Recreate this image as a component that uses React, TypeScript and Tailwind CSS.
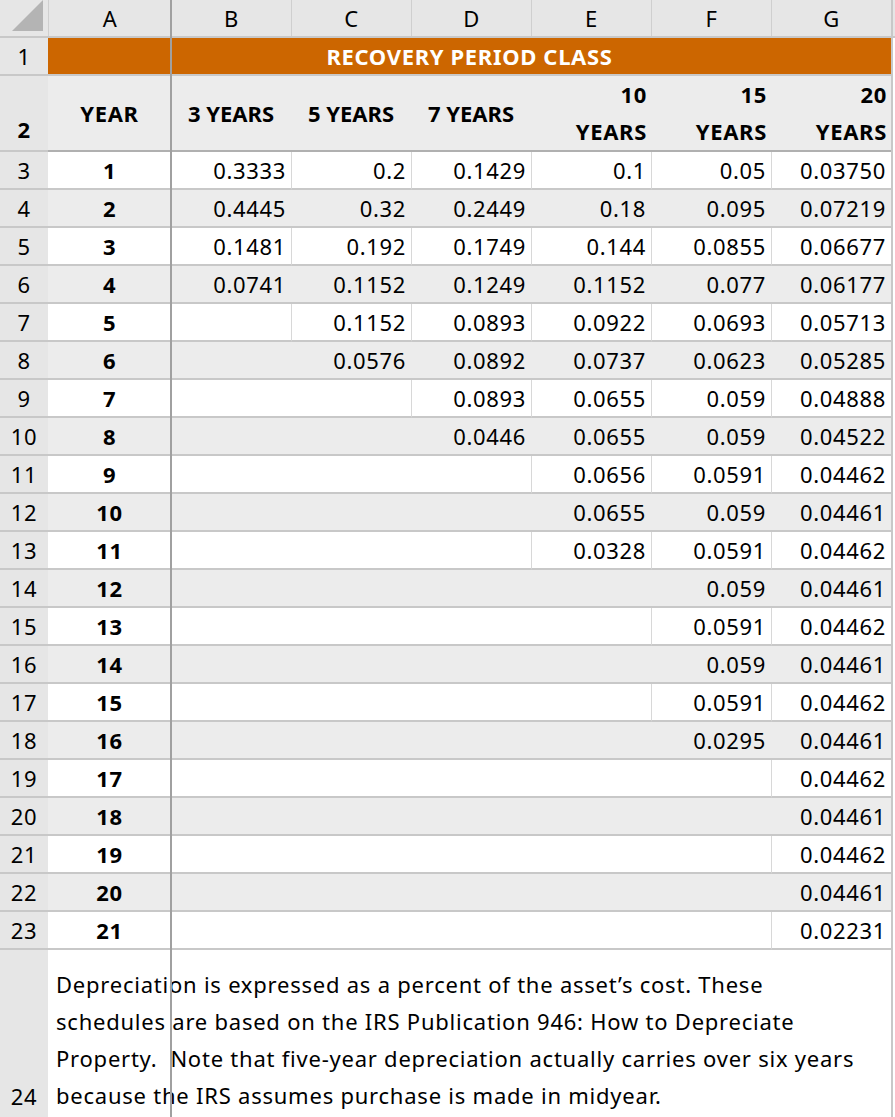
const cols = ["A", "B", "C", "D", "E", "F", "G"];
const widths = ["w-[123px]", "w-[120px]", "w-[120px]", "w-[120px]", "w-[120px]", "w-[120px]", "w-[120px]"];

const data: string[][] = [
  ["0.3333", "0.2", "0.1429", "0.1", "0.05", "0.03750"],
  ["0.4445", "0.32", "0.2449", "0.18", "0.095", "0.07219"],
  ["0.1481", "0.192", "0.1749", "0.144", "0.0855", "0.06677"],
  ["0.0741", "0.1152", "0.1249", "0.1152", "0.077", "0.06177"],
  ["", "0.1152", "0.0893", "0.0922", "0.0693", "0.05713"],
  ["", "0.0576", "0.0892", "0.0737", "0.0623", "0.05285"],
  ["", "", "0.0893", "0.0655", "0.059", "0.04888"],
  ["", "", "0.0446", "0.0655", "0.059", "0.04522"],
  ["", "", "", "0.0656", "0.0591", "0.04462"],
  ["", "", "", "0.0655", "0.059", "0.04461"],
  ["", "", "", "0.0328", "0.0591", "0.04462"],
  ["", "", "", "", "0.059", "0.04461"],
  ["", "", "", "", "0.0591", "0.04462"],
  ["", "", "", "", "0.059", "0.04461"],
  ["", "", "", "", "0.0591", "0.04462"],
  ["", "", "", "", "0.0295", "0.04461"],
  ["", "", "", "", "", "0.04462"],
  ["", "", "", "", "", "0.04461"],
  ["", "", "", "", "", "0.04462"],
  ["", "", "", "", "", "0.04461"],
  ["", "", "", "", "", "0.02231"],
];

const headers = ["3 YEARS", "5 YEARS", "7 YEARS", "10 YEARS", "15 YEARS", "20 YEARS"];

const note = [
  "Depreciation is expressed as a percent of the asset’s cost. These",
  "schedules are based on the IRS Publication 946: How to Depreciate",
  "Property.\u00a0 Note that five-year depreciation actually carries over six years",
  "because the IRS assumes purchase is made in midyear.",
];

function RowHead({ n, tall }: { n: number; tall?: boolean }) {
  return (
    <div className={`w-[48px] shrink-0 bg-[#e6e6e6] border-b-2 border-[#c8c8c8] flex justify-center ${tall ? "items-end pb-1" : "items-center"}`}>
      {n}
    </div>
  );
}

export default function App() {
  return (
    <div className="relative w-[895px] h-[1117px] overflow-hidden bg-white text-[22px] tracking-[0.03em] text-black" style={{ fontFamily: '"Noto Sans", sans-serif' }}>
      {/* column letters */}
      <div className="flex h-[38px] bg-[#e6e6e6] border-b-2 border-[#c8c8c8]">
        <div className="w-[48px] shrink-0 flex items-end justify-end p-[5px]">
          <div className="w-0 h-0 border-l-[31px] border-l-transparent border-b-[31px] border-b-[#b4b4b4]" />
        </div>
        {cols.map((c, i) => (
          <div key={c} className={`${widths[i]} shrink-0 flex items-center justify-center border-l border-[#cfcfcf]`}>{c}</div>
        ))}
      </div>

      {/* row 1 */}
      <div className="flex h-[38px]">
        <RowHead n={1} />
        <div className="w-[843px] shrink-0 bg-[#cc6600] border-b-2 border-[#c8c8c8] flex items-center justify-center text-white font-bold">
          RECOVERY PERIOD CLASS
        </div>
      </div>

      {/* row 2 */}
      <div className="flex h-[76px] font-bold">
        <RowHead n={2} tall />
        <div className="w-[123px] shrink-0 bg-[#ececec] border-b-2 border-[#b0b0b0] flex items-center justify-center">YEAR</div>
        {headers.map((h, i) => (
          <div key={h} className={`w-[120px] shrink-0 bg-[#ececec] border-b-2 border-[#b0b0b0] flex px-1 leading-[37px] ${i < 3 ? "items-center justify-center whitespace-nowrap tracking-normal" : "flex-col items-end justify-end text-right"}`}>
            {i < 3 ? h : h.split(" ").map((w) => <span key={w}>{w}</span>)}
          </div>
        ))}
      </div>

      {/* data rows */}
      {data.map((row, r) => {
        const gray = r % 2 === 1;
        return (
          <div key={r} className="flex h-[38px]">
            <RowHead n={r + 3} />
            <div className={`w-[123px] shrink-0 border-b-2 border-[#c8c8c8] flex items-center justify-center font-bold ${gray ? "bg-[#ececec]" : "bg-white"}`}>{r + 1}</div>
            {row.map((v, i) => (
              <div
                key={i}
                className={`w-[120px] shrink-0 border-b-2 border-[#c8c8c8] flex items-center justify-end pr-[5px] ${gray ? "bg-[#ececec]" : "bg-white"} ${!gray && v ? "border-l border-l-[#d8d8d8]" : ""}`}
              >
                {v}
              </div>
            ))}
          </div>
        );
      })}

      {/* row 24 */}
      <div className="flex h-[167px]">
        <div className="w-[48px] shrink-0 bg-[#e6e6e6] flex items-end justify-center pb-[4px]">24</div>
        <div className="flex-1 flex flex-col justify-end pl-[8px] pb-[3px] leading-[37px] text-[22px] tracking-[0.035em] whitespace-nowrap">
          {note.map((l) => <div key={l}>{l}</div>)}
        </div>
      </div>

      {/* frozen pane divider */}
      <div className="absolute top-0 bottom-0 left-[170px] w-[2px] bg-[#a0a0a0]" />
      <div className="absolute top-0 bottom-0 left-[891px] w-[2px] bg-[#c8c8c8]" />
    </div>
  );
}
